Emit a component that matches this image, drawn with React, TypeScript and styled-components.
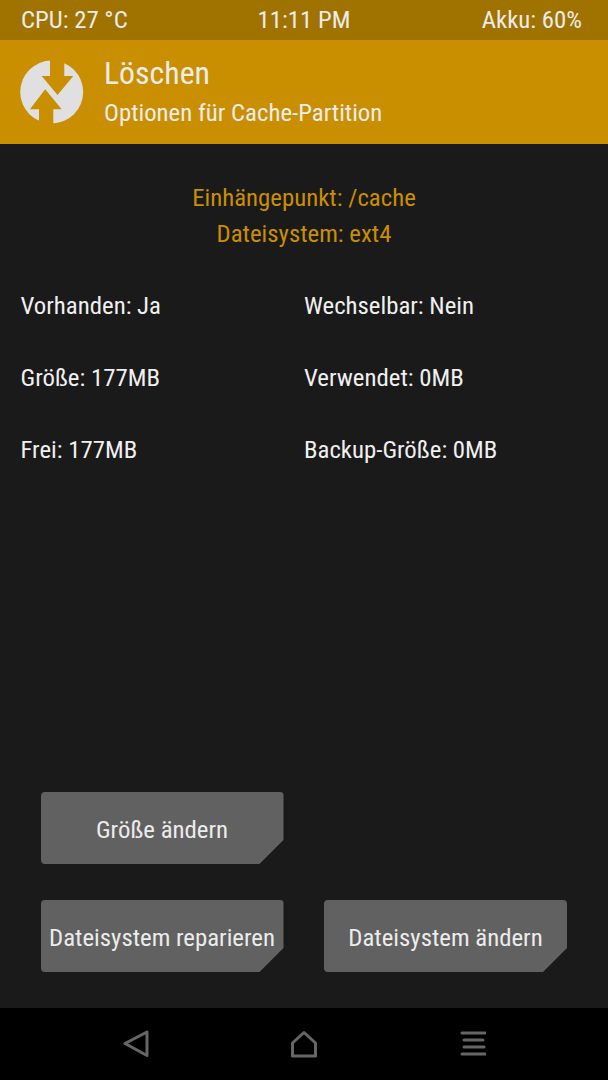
import React from "react";
import styled, { createGlobalStyle } from "styled-components";

const GlobalStyle = createGlobalStyle`
  html, body {
    margin: 0;
    padding: 0;
    background: #1a1a1a;
  }
`;

const Screen = styled.div`
  width: 608px;
  height: 1080px;
  display: flex;
  flex-direction: column;
  overflow: hidden;
  background: #1a1a1a;
  color: #f0f0f0;
  font-family: Roboto, "Liberation Sans", sans-serif;
  font-stretch: 75%;
  font-size: 24.8px;
  white-space: nowrap;
`;

const StatusBar = styled.div`
  height: 40px;
  flex: none;
  box-sizing: border-box;
  background: #a07200;
  color: #ececec;
  display: grid;
  grid-template-columns: 1fr auto 1fr;
  align-items: center;
  padding: 0 21px 2px;
`;

const StatusRight = styled.div`
  justify-self: end;
  margin-right: 5px;
`;

const Header = styled.div`
  height: 104px;
  flex: none;
  background: #c98f00;
  color: #ececec;
  display: flex;
  align-items: center;
  gap: 20px;
  padding-left: 20px;
`;

const HeaderText = styled.div`
  display: flex;
  flex-direction: column;
  gap: 5px;
  margin-bottom: 1px;
`;

const Title = styled.div`
  font-size: 31.8px;
  line-height: 38px;
`;

const Subtitle = styled.div`
  line-height: 32px;
`;

const Main = styled.div`
  flex: 1;
  display: flex;
  flex-direction: column;
  padding-top: 36px;
`;

const InfoLine = styled.div`
  height: 36px;
  line-height: 36px;
  text-align: center;
  color: #c98f00;
`;

const Grid = styled.div`
  display: grid;
  grid-template-columns: 283.5px 1fr;
  grid-auto-rows: 72px;
  padding: 18px 0 0 20.5px;
  line-height: 72px;
`;

const Buttons = styled.div`
  margin-top: auto;
  display: grid;
  grid-template-columns: 243px 243px;
  column-gap: 40.5px;
  row-gap: 36px;
  padding: 0 0 36px 40.5px;
`;

const Button = styled.div`
  height: 72px;
  box-sizing: border-box;
  padding-top: 3px;
  display: flex;
  align-items: center;
  justify-content: center;
  background: #616161;
  color: #ececec;
  border-radius: 4px;
  clip-path: polygon(0 0, 100% 0, 100% 48px, 219px 100%, 0 100%);
`;

const FirstRowButton = styled(Button)`
  grid-column: 1 / span 2;
  width: 243px;
`;

const NavBar = styled.div`
  height: 72px;
  flex: none;
  background: #000;
  display: grid;
  grid-template-columns: 272px 64px 272px;
  align-items: center;
  justify-items: center;
`;

const NavIcon = styled.svg`
  width: 28px;
  height: 28px;
  fill: none;
  stroke: #666;
  stroke-width: 3;
  stroke-linejoin: round;
  stroke-linecap: round;
`;

const Logo = () => (
  <svg width="64" height="64" viewBox="0 0 64 64">
    <circle cx="31.7" cy="32" r="31.5" fill="#e0e0e0" />
    <path
      d="M30 -1 V16 H21.7 L37.5 35 L53.3 16 H44.3 V-1 Z"
      fill="#c98f00"
    />
    <path
      d="M25.2 29.3 L10 49.3 H19 V65 H33.3 V49.3 H41.7 Z"
      fill="#c98f00"
    />
  </svg>
);

export default function App() {
  return (
    <Screen>
      <GlobalStyle />
      <StatusBar>
        <div>CPU: 27 °C</div>
        <div>11:11 PM</div>
        <StatusRight>Akku: 60%</StatusRight>
      </StatusBar>
      <Header>
        <Logo />
        <HeaderText>
          <Title>Löschen</Title>
          <Subtitle>Optionen für Cache-Partition</Subtitle>
        </HeaderText>
      </Header>
      <Main>
        <InfoLine>Einhängepunkt: /cache</InfoLine>
        <InfoLine>Dateisystem: ext4</InfoLine>
        <Grid>
          <div>Vorhanden: Ja</div>
          <div>Wechselbar: Nein</div>
          <div>Größe: 177MB</div>
          <div>Verwendet: 0MB</div>
          <div>Frei: 177MB</div>
          <div>Backup-Größe: 0MB</div>
        </Grid>
        <Buttons>
          <FirstRowButton>Größe ändern</FirstRowButton>
          <Button>Dateisystem reparieren</Button>
          <Button>Dateisystem ändern</Button>
        </Buttons>
      </Main>
      <NavBar>
        <NavIcon viewBox="0 0 28 28">
          <path d="M25 2 V25.5 L3 13.5 Z" />
        </NavIcon>
        <NavIcon viewBox="0 0 28 28">
          <path d="M14 2.5 L25.5 13 V26 H2.5 V13 Z" />
        </NavIcon>
        <NavIcon viewBox="0 0 28 28">
          <path d="M4 3 H27 M6 10 H25 M6 17 H26 M4 24 H27" />
        </NavIcon>
      </NavBar>
    </Screen>
  );
}
